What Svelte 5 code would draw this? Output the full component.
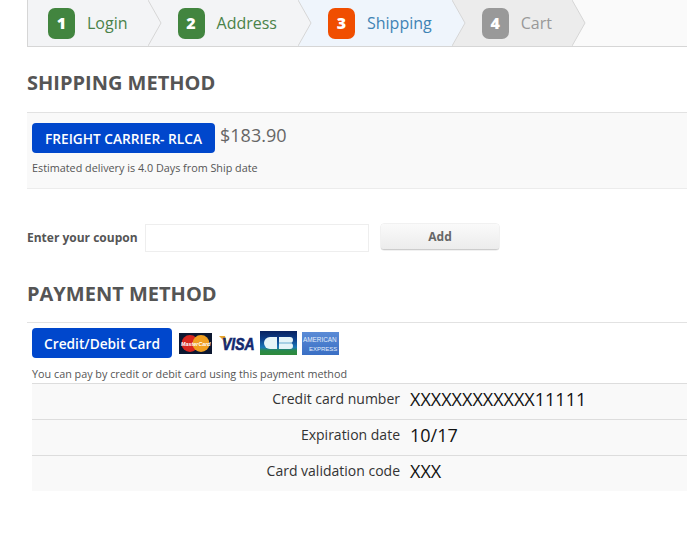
<script lang="ts">
	const steps = [
		{ num: 1, label: 'Login', kind: 'done' },
		{ num: 2, label: 'Address', kind: 'done' },
		{ num: 3, label: 'Shipping', kind: 'current' },
		{ num: 4, label: 'Cart', kind: 'todo' }
	];

	const fields = [
		{ label: 'Credit card number', value: 'XXXXXXXXXXXX11111' },
		{ label: 'Expiration date', value: '10/17' },
		{ label: 'Card validation code', value: 'XXX' }
	];
</script>

<div class="page">
	<nav class="steps">
		{#each steps as step}
			<div class="step {step.kind}">
				<span class="badge">{step.num}</span>
				<span class="name">{step.label}</span>
				<svg class="chevron" width="14" height="46" viewBox="0 0 14 46">
					<path d="M0 0 L13 23 L0 46 Z" stroke="none" />
					<polyline points="0,0 13,23 0,46" fill="none" stroke="#d6d6d6" />
				</svg>
			</div>
		{/each}
	</nav>

	<h2 class="ship-title">SHIPPING METHOD</h2>
	<section class="ship-panel">
		<div class="ship-line">
			<button class="primary freight">FREIGHT CARRIER- RLCA</button>
			<span class="price">$183.90</span>
		</div>
		<p class="note">Estimated delivery is 4.0 Days from Ship date</p>
	</section>

	<div class="coupon">
		<label for="coupon">Enter your coupon</label>
		<input id="coupon" type="text" />
		<button class="add">Add</button>
	</div>

	<h2 class="pay-title">PAYMENT METHOD</h2>
	<section class="pay-panel">
		<div class="pay-line">
			<button class="primary card">Credit/Debit Card</button>
			<div class="logos">
				<svg class="mc" width="33" height="21" viewBox="0 0 33 21">
					<rect width="33" height="21" fill="#0c1730" />
					<circle cx="11" cy="10.5" r="8.5" fill="#d8261f" />
					<circle cx="22" cy="10.5" r="8.5" fill="#f0a020" />
					<text x="2" y="12.5" font-size="5.4" font-weight="700" font-style="italic" font-family="'Liberation Sans', sans-serif" fill="#fff">MasterCard</text>
				</svg>
				<svg class="visa" width="37" height="21" viewBox="0 0 37 21">
					<path d="M0 3 L6 3 L8 11 Z" fill="#e8a52c" />
					<text transform="translate(3 16.8) scale(1 1.2)" font-size="14" font-weight="700" font-style="italic" font-family="'Liberation Sans', sans-serif" fill="#14296f" stroke="#14296f" stroke-width="0.5">VISA</text>
				</svg>
				<svg class="cb" width="37" height="24" viewBox="0 0 37 24">
					<defs>
						<linearGradient id="cbg" x1="0" y1="0" x2="0" y2="1">
							<stop offset="0" stop-color="#08215f" />
							<stop offset="0.35" stop-color="#0d3f8a" />
							<stop offset="0.68" stop-color="#1b78b8" />
							<stop offset="0.82" stop-color="#2a8a4a" />
							<stop offset="1" stop-color="#2f8a3a" />
						</linearGradient>
					</defs>
					<rect width="37" height="24" fill="url(#cbg)" />
					<path d="M17 6 H10 a5.5 5.5 0 0 0 0 12 H17 Z" fill="#e6f4f8" />
					<path d="M19 6 H30 a3 3 0 0 1 0 6 a3 3 0 0 1 0 6 H19 Z" fill="#e6f4f8" />
					<rect x="19" y="11.4" width="12" height="1.2" fill="#7fb8d8" />
				</svg>
				<svg class="amex" width="37" height="23" viewBox="0 0 37 23">
					<defs>
						<linearGradient id="amexg" x1="0" y1="0" x2="0" y2="1">
							<stop offset="0" stop-color="#5a8bd6" />
							<stop offset="1" stop-color="#3a6fc4" />
						</linearGradient>
					</defs>
					<rect width="37" height="23" fill="url(#amexg)" />
					<text x="1" y="10" font-size="6.4" font-family="'Liberation Sans', sans-serif" fill="#e4eefb">AMERICAN</text>
					<text x="7" y="19" font-size="6" font-family="'Liberation Sans', sans-serif" fill="#e4eefb">EXPRESS</text>
				</svg>
			</div>
		</div>
		<p class="note pay-note">You can pay by credit or debit card using this payment method</p>
		<div class="fields">
			{#each fields as field}
				<div class="field">
					<span class="field-label">{field.label}</span>
					<span class="field-value">{field.value}</span>
				</div>
			{/each}
		</div>
	</section>
</div>

<style>
	:global(body) {
		background: #fff;
		overflow: hidden;
	}

	.page {
		height: 547px;
		padding-left: 27px;
		box-sizing: border-box;
		font-family: 'Open Sans', sans-serif;
		color: #555;
		overflow: hidden;
	}

	.steps {
		display: flex;
		height: 46px;
		background: #fafafa;
		border-left: 1px solid #d6d6d6;
		border-bottom: 1px solid #d6d6d6;
	}

	.step {
		position: relative;
		display: flex;
		align-items: center;
		gap: 12px;
		padding: 0 20px 0 30px;
		font-size: 16px;
	}

	.step:first-child {
		padding-left: 20px;
	}

	.step:nth-child(2) {
		padding-right: 21px;
	}

	.badge {
		display: flex;
		align-items: center;
		justify-content: center;
		width: 27px;
		height: 31px;
		border-radius: 7px;
		color: #fff;
		font-weight: 800;
		font-size: 16px;
	}

	.chevron {
		position: absolute;
		left: 100%;
		top: 0;
		z-index: 1;
	}

	.done {
		background: #f3f4f6;
		color: #4a8249;
	}

	.done .badge {
		background: #42853f;
	}

	.done .chevron path {
		fill: #f3f4f6;
	}

	.current {
		background: #eff5fc;
		color: #3f83b4;
	}

	.current .badge {
		background: #f04e00;
	}

	.current .chevron path {
		fill: #eff5fc;
	}

	.todo {
		background: #ececec;
		color: #999;
	}

	.todo .badge {
		background: #999;
	}

	.todo .chevron path {
		fill: #ececec;
	}

	h2 {
		margin: 0;
		font-size: 20px;
		line-height: 27px;
		font-weight: 700;
		color: #555;
	}

	.ship-title {
		margin-top: 22px;
	}

	.ship-panel {
		margin-top: 16px;
		height: 65px;
		padding: 10px 5px 0;
		background: #f9f9f9;
		border-top: 1px solid #e2e2e2;
		border-bottom: 1px solid #ececec;
	}

	.ship-line,
	.pay-line {
		display: flex;
		align-items: center;
	}

	.primary {
		border: none;
		background: #0047cc;
		color: #fff;
		border-radius: 4px;
		font-family: inherit;
		font-size: 13.7px;
		font-weight: 600;
		padding: 0;
	}

	.freight {
		width: 183px;
		height: 30px;
	}

	.price {
		margin-left: 5px;
		padding-bottom: 6px;
		font-size: 18px;
		color: #666;
	}

	.note {
		margin: 7px 0 0;
		font-size: 10.8px;
		line-height: 16px;
		color: #555;
	}

	.coupon {
		display: flex;
		align-items: flex-start;
		margin-top: 35px;
	}

	.coupon label {
		font-size: 12px;
		font-weight: 700;
		line-height: 27px;
		width: 118px;
	}

	.coupon input {
		width: 224px;
		height: 28px;
		box-sizing: border-box;
		border: 1px solid #eee;
		background: #fff;
		padding: 0;
		outline: none;
	}

	.add {
		margin-left: 12px;
		width: 118px;
		height: 26px;
		border: none;
		border-bottom: 1px solid #ccc;
		border-radius: 3px;
		background: linear-gradient(#fafafa, #ececec);
		box-shadow: 0 0 0 0.5px #e4e4e4;
		font-family: inherit;
		font-size: 12px;
		font-weight: 700;
		color: #666;
		padding: 0;
	}

	.pay-title {
		margin-top: 28px;
	}

	.pay-panel {
		margin-top: 15px;
		border-top: 1px solid #e2e2e2;
		padding: 5px 0 0 5px;
	}

	.card {
		width: 140px;
		height: 30px;
	}

	.logos {
		display: flex;
		align-items: center;
		gap: 4px;
		margin-left: 7px;
	}

	.visa {
		margin-left: 3px;
	}

	.amex {
		margin-left: 1px;
	}

	.pay-note {
		margin: 7px 0 0;
		line-height: 17px;
	}

	.fields {
		margin-top: 1px;
	}

	.field {
		display: flex;
		align-items: center;
		height: 35px;
		background: #f9f9f9;
		border-top: 1px solid #ddd;
	}

	.field-label {
		width: 368px;
		padding-bottom: 6px;
		text-align: right;
		font-size: 14px;
		color: #333;
	}

	.field-value {
		margin-left: 10px;
		padding-bottom: 5px;
		font-size: 18px;
		color: #111;
	}
</style>
